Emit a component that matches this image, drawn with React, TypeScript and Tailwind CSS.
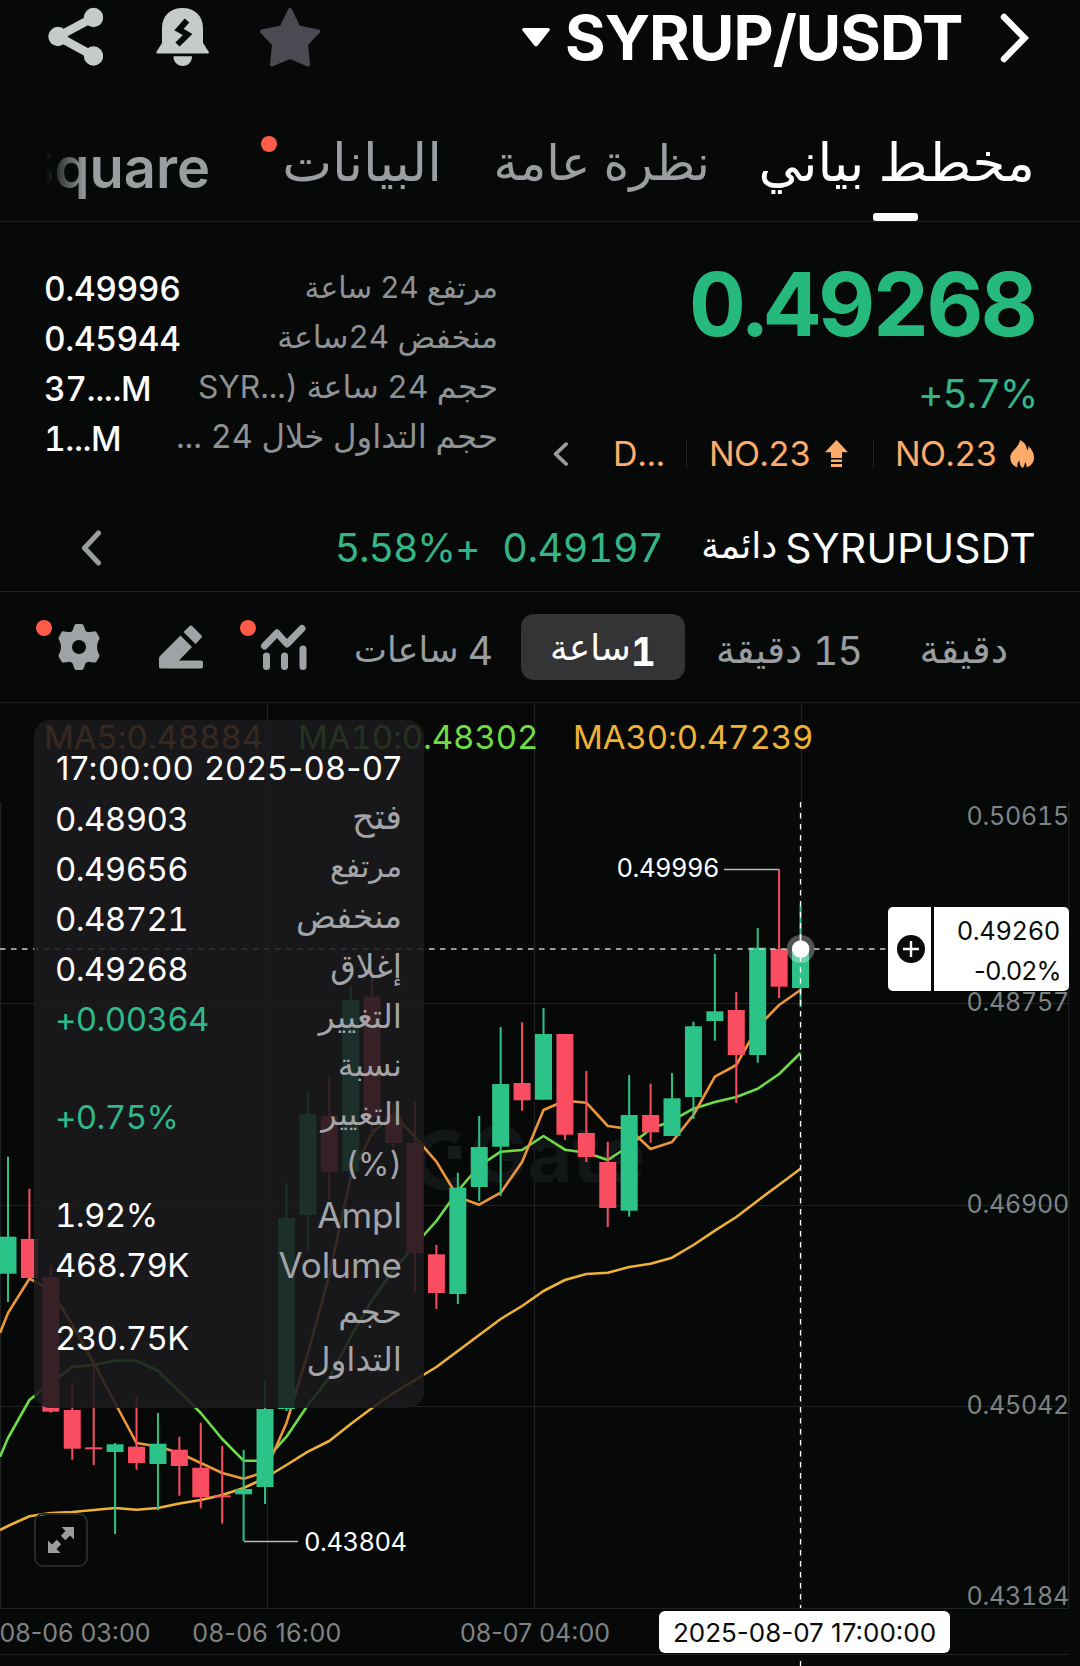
import React from 'react';

type Candle = [top: number, bottom: number, high: number, low: number, up: boolean];

const CANDLE_STEP = 21.42;
const FIRST_X = 8;

const candles: Candle[] = [
    [1236.7, 1273.7, 1156.7, 1302, true],
    [1239, 1278, 1188.7, 1278, false],
    [1277, 1411.7, 1266, 1412.7, false],
    [1410, 1448.7, 1383, 1459.7, false],
    [1447.3, 1449.3, 1366, 1465, false],
    [1444.3, 1452, 1443, 1534, true],
    [1446.7, 1463, 1396, 1469.7, false],
    [1443.7, 1464, 1413, 1510, true],
    [1449.7, 1466, 1436.7, 1495.7, false],
    [1467.7, 1497.3, 1422.7, 1508.3, false],
    [1495.3, 1497.3, 1446, 1523.7, false],
    [1489, 1494.3, 1450, 1541, true],
    [1409, 1487, 1380, 1504, true],
    [1218, 1409, 1183, 1411, true],
    [1114, 1215, 1092, 1250, true],
    [1115.7, 1172, 1076.7, 1200, false],
    [1000, 1171, 986, 1180, true],
    [996.7, 1117, 975, 1136, false],
    [1117, 1143, 1103, 1150, false],
    [1143, 1253, 1102, 1293, false],
    [1254.3, 1293, 1245, 1309, false],
    [1187.7, 1294, 1172.7, 1304, true],
    [1147, 1187, 1116, 1201, true],
    [1084, 1146.7, 1027, 1196, true],
    [1083, 1100.3, 1022.3, 1110.7, false],
    [1034, 1099.7, 1008, 1099.7, true],
    [1034, 1134.7, 1034, 1140, false],
    [1133, 1157, 1071, 1162, false],
    [1162, 1208, 1141.7, 1227, false],
    [1115, 1210.7, 1075, 1216.7, true],
    [1115, 1132.3, 1083.7, 1142.7, false],
    [1098.3, 1136, 1073, 1136, true],
    [1026.3, 1097, 1021.7, 1119, true],
    [1011.3, 1021, 954, 1040.7, true],
    [1010, 1055, 992, 1103, false],
    [947.7, 1055, 928, 1062.7, true],
    [949, 986.7, 869.3, 998, false],
    [948.5, 988, 905.7, 1007, true],
];

const ma5 = [
    1313, 1278.7, 1290, 1325, 1363, 1403, 1443, 1446.5, 1453, 1463, 1473, 1478.7, 1472, 1423, 1353, 1275, 1177, 1133,
    1114, 1137, 1161.7, 1197, 1204.7, 1192.7, 1162, 1110, 1100.7, 1102.7, 1126, 1129, 1149, 1142, 1115, 1076.7, 1065,
    1027, 1005, 990,
];
const ma10 = [
    1438, 1400, 1383, 1367, 1365, 1360.7, 1360.7, 1370.7, 1391.7, 1413, 1439, 1460.7, 1460.7, 1436.7, 1405, 1378, 1337,
    1300, 1270, 1245, 1221, 1191, 1166, 1151.7, 1150, 1136, 1149.7, 1152.7, 1160, 1146, 1129, 1120.7, 1108.7, 1102,
    1097, 1088.7, 1074, 1053,
];
const ma30 = [
    1526, 1516.3, 1513, 1512, 1510, 1508, 1509.7, 1508, 1503.5, 1500, 1495, 1488, 1478, 1465, 1451.7, 1441, 1424, 1408,
    1393, 1380, 1367, 1351, 1335, 1319, 1306, 1291, 1280, 1274, 1272.7, 1267, 1263.7, 1257.7, 1245, 1230.7, 1217,
    1200.7, 1184.7, 1168.7,
];

const toPoints = (edge: number, values: number[]) =>
    [`0,${edge}`, ...values.map((y, i) => `${(FIRST_X + i * CANDLE_STEP).toFixed(1)},${y}`)].join(' ');

const priceLabels = [
    { y: 816, text: '0.50615' },
    { y: 1002, text: '0.48757' },
    { y: 1204, text: '0.46900' },
    { y: 1405, text: '0.45042' },
    { y: 1596, text: '0.43184' },
];

const RedDot: React.FC<{ className: string }> = ({ className }) => (
    <span className={`absolute size-4 rounded-full bg-[#ff5b49] ${className}`} />
);

const ShareIcon = () => (
    <svg width="55" height="60" viewBox="0 0 55 60">
        <path d="M45.500 10.500 10 29.500l35.500 19.500" fill="none" stroke="#c5cacb" strokeWidth="8.500" />
        <g fill="#c5cacb">
            <circle cx="45.500" cy="10.500" r="9.700" />
            <circle cx="10" cy="29.500" r="9.700" />
            <circle cx="45.500" cy="49" r="9.700" />
        </g>
    </svg>
);

const BellIcon = () => (
    <svg width="54" height="60" viewBox="0 0 54 60">
        <path
            d="M6 21C6 8 15 1 26.500 1S47 8 47 21v15l5.700 8.700c.7 1.200 0 1.700-1 1.700H1.500c-1 0-1.500-.7-1-1.700L6 36Z"
            fill="#c5cacb"
        />
        <path d="M17.500 49.200h18.500c0 6-4 9.700-9.200 9.700s-9.300-3.700-9.300-9.700Z" fill="#c5cacb" />
        <path d="M31 13.500 23 22.500l8.500 5-10 10" fill="none" stroke="#060908" strokeWidth="6" />
    </svg>
);

const StarIcon = () => (
    <svg width="62" height="60" viewBox="0 0 62 60">
        <path
            d="m31 3 8.500 17.500L59 24.500 47 37l2 20.500L31 50 13 57.500l2-20.500L3 24.500l19.500-4Z"
            fill="#4a4b52"
            stroke="#4a4b52"
            strokeWidth="4"
            strokeLinejoin="round"
        />
    </svg>
);

const FlameIcon = () => (
    <svg width="24" height="28" viewBox="0 0 24 28" fill="#ffac6a">
        <path d="M10 0c4.500 2.200 7 6 7 10.500 1-.8 1.500-2.500 1.300-4.500C21.800 9 24 13 24 17.500c0 5-3 8.500-7.500 10 .3-2.500-.3-4-1.500-5.500-.2 2.800-.8 4.500-2.500 6-2-1.500-3-3.500-3-7.500C7.500 22.500 7 24.500 7.500 27.300 3 26 .3 22.500.3 17.500.3 10.500 9 8 10 0Z" />
    </svg>
);

const UpIcon = () => (
    <svg width="23" height="28" viewBox="0 0 23 28" fill="#ffac6a">
        <path d="M11.500 0 23 12.300h-6V18H6v-5.700H0Z" />
        <path d="M6 19.600h11v2.400H6zM6 24h11v3H6z" />
    </svg>
);

const GearIcon = () => (
    <svg width="44" height="48" viewBox="0 0 44 48">
        <path
            fillRule="evenodd"
            d="M17 3.500C17.600 1.500 18.500 1 20 1h4c1.500 0 2.400.5 3 2.500l1 3c.6 2 2.500 3 4.500 2.600l4.500-.7c1.300-.2 2 .3 2.700 1.400l2.300 4c.7 1.200.7 2-.2 3.200l-1 2.500c-1 2.200-1 6.800 0 9l1 2.500c.9 1.200.9 2 .2 3.200l-2.300 4c-.7 1.100-1.400 1.600-2.700 1.400l-4.500-.7c-2-.4-3.900.6-4.500 2.600l-1 3C26.400 46.500 25.500 47 24 47h-4c-1.500 0-2.400-.5-3-2.500l-1-3c-.6-2-2.500-3-4.500-2.600l-4.500.7c-1.300.2-2-.3-2.700-1.400l-2.300-4c-.7-1.200-.7-2 .2-3.200l1-2.500c1-2.200 1-6.800 0-9l-1-2.500c-.9-1.200-.9-2-.2-3.200l2.300-4C5 8.700 5.700 8.200 7 8.400l4.500.7C13.500 9.500 15.400 8.500 16 6.500ZM22 17a7 7 0 1 0 0 14 7 7 0 0 0 0-14Z"
            fill="#9fa3a5"
        />
    </svg>
);

const PencilIcon = () => (
    <svg width="44" height="44" viewBox="0 0 44 44" fill="#9fa3a5">
        <path d="M21.500 10.500 33 22 20 35.500h21.500c1.600 0 2.500.8 2.500 2v4c0 1.200-.8 2-2 2H2c-1.200 0-2-.8-2-2V33.500c0-1 .3-1.800 1-2.500Z" />
        <path d="M30.500 1.200c.9-.9 2-.9 2.900 0l8.800 9c.9.9.9 2 0 2.900L36.500 19 24.500 7Z" />
    </svg>
);

const IndicatorIcon = () => (
    <svg width="46" height="46" viewBox="0 0 46 46" fill="none" stroke="#9fa3a5" strokeWidth="7">
        <path d="M3.500 22 16 9l10 11L41 4.500" strokeLinecap="round" strokeLinejoin="round" />
        <path d="M5.500 32v10.500M23.500 32v10.500M42 25v17.500" strokeLinecap="round" />
    </svg>
);

const ChevronLeft: React.FC<{ className: string }> = ({ className }) => (
    <svg className={className} viewBox="0 0 20 36" fill="none" stroke="#9a9da0" strokeWidth="5" preserveAspectRatio="none">
        <path d="M17.500 3 3.500 18l14 15" strokeLinecap="round" strokeLinejoin="round" />
    </svg>
);

const Header = () => (
    <header className="flex h-[104px] items-start justify-between pl-12 pr-[50px] pt-[7px]">
        <div className="flex items-start gap-[53px]">
            <ShareIcon />
            <BellIcon />
            <div className="-ml-1">
                <StarIcon />
            </div>
        </div>
        <div className="flex items-center">
            <svg width="28" height="19" viewBox="0 0 28 19" fill="#fff">
                <path d="M2 0h24c1.700 0 2.400 1.500 1.300 2.800L15.500 17.700c-.8 1-2.200 1-3 0L.7 2.800C-.4 1.500.3 0 2 0Z" />
            </svg>
            <h1 className="ml-[15px] w-[435px] whitespace-nowrap text-[62px] font-bold leading-[61px] tracking-[-0.9px] text-white">
                SYRUP/USDT
            </h1>
            <svg width="30" height="50" viewBox="0 0 30 50" fill="none" stroke="#fff" strokeWidth="6.500">
                <path d="m4 4 20.500 21L4 46" strokeLinecap="round" strokeLinejoin="miter" />
            </svg>
        </div>
    </header>
);

const Tabs = () => (
    <nav dir="rtl" className="flex h-[118px] items-center border-b border-[#1f2122] pb-1 pr-[45px] text-[#9b9ea0]">
        <div className="relative flex h-full w-[275px] items-center whitespace-nowrap pt-1 text-[53px] text-white">
            مخطط بياني
            <span className="absolute -bottom-1 left-[113px] h-2 w-[45px] rounded-[3px] bg-white" />
        </div>
        <div className="mr-[50px] w-[215px] whitespace-nowrap pt-1 text-[49px]">نظرة عامة</div>
        <div className="relative mr-[53px] w-[158px] whitespace-nowrap pt-1 text-[53px]">
            البيانات
            <RedDot className="-left-[23px] top-[17px]" />
        </div>
        <div className="relative mr-[76px] h-full w-[165px]">
            <span dir="ltr" className="absolute -right-0.5 top-[31px] whitespace-nowrap text-[56px] font-semibold leading-[66px]">
                Square
            </span>
            <span className="absolute inset-y-0 -left-12 w-[51px] bg-[#060908]" />
            <span className="absolute inset-y-0 left-[3px] w-10 bg-linear-to-r from-[#060908] to-transparent" />
        </div>
    </nav>
);

const stats = [
    { label: 'مرتفع 24 ساعة', value: '0.49996', size: 'text-[29.700px]' },
    { label: 'منخفض 24ساعة', value: '0.45944', size: 'text-[31.300px]' },
    { label: 'حجم 24 ساعة (...SYR', value: '37....M', size: 'text-[31.700px]' },
    { label: 'حجم التداول خلال 24 ...', value: '1...M', size: 'text-[32.400px]' },
];

const Summary = () => (
    <section className="flex h-[270px] justify-between pl-11 pr-[45px]">
        <div className="mt-[41px] w-[454px]">
            {stats.map((s) => (
                <div key={s.value} className="flex h-[50px] items-center justify-between">
                    <span className="pt-px text-[33.500px] font-medium leading-[48px] tracking-[-0.400px] text-white">{s.value}</span>
                    <span dir="rtl" className={`whitespace-nowrap pb-0.5 leading-[46px] text-[#8f9294] ${s.size}`}>
                        {s.label}
                    </span>
                </div>
            ))}
        </div>
        <div className="flex flex-col items-end">
            <div className="mt-[37px] text-[88px] font-bold leading-[90px] tracking-[-2.700px] text-[#25b97e]">0.49268</div>
            <div className="-mr-0.5 mt-[22px] text-[39px] leading-[46px] tracking-[-1.200px] text-[#35b487]">+5.7%</div>
            <div className="mr-px mt-[23px] flex h-[28px] items-center text-[34px] leading-[28px] text-[#ffac6a]">
                <ChevronLeft className="mr-[45px] h-6 w-[15px]" />
                <span className="w-[73px]">D...</span>
                <span className="h-7 w-px bg-[#242627]" />
                <span className="ml-[22px] w-[116px] tracking-[-0.600px]">NO.23</span>
                <UpIcon />
                <span className="ml-[25px] h-7 w-px bg-[#242627]" />
                <span className="ml-[21px] w-[115px] tracking-[-0.500px]">NO.23</span>
                <FlameIcon />
            </div>
        </div>
    </section>
);

const PerpetualRow = () => (
    <section className="flex h-[100px] items-center justify-between border-b border-[#1f2122] pl-[81px] pr-11 pt-3">
        <ChevronLeft className="h-9 w-5" />
        <div className="flex items-center whitespace-nowrap leading-[48px]">
            <span className="mr-[23px] text-[39.500px] tracking-[-1.200px] text-[#35b487]">5.58%+</span>
            <span className="mr-[38px] text-[39.500px] tracking-[-0.500px] text-[#35b487]">0.49197</span>
            <span className="mr-2 pb-1.5 text-[36px] leading-[42px] text-white">دائمة</span>
            <span className="text-[41px] tracking-[0.200px] text-white">SYRUPUSDT</span>
        </div>
    </section>
);

const Toolbar = () => (
    <section className="flex h-[111px] items-center border-b border-[#1f2122] pb-px text-[#9b9ea0]">
        <div className="relative ml-[57px]">
            <GearIcon />
            <RedDot className="-left-[21px] -top-[3px]" />
        </div>
        <div className="ml-[58px]">
            <PencilIcon />
        </div>
        <div className="relative ml-[58px]">
            <IndicatorIcon />
            <RedDot className="-left-[21px] -top-[4px]" />
        </div>
        <div dir="rtl" className="ml-[47px] flex w-[139px] items-center justify-between whitespace-nowrap pt-2">
            <span className="text-[39px] leading-[50px]">4</span>
            <span className="pb-1 text-[35px] leading-[50px]">ساعات</span>
        </div>
        <div dir="rtl" className="ml-[28px] flex h-[66px] w-[164px] items-center justify-center rounded-[13px] bg-[#343437] pt-1.5 text-white">
            <span className="pt-1 text-[39px] font-bold leading-[46px]">1</span>
            <span className="pb-1 text-[35.500px] leading-[46px]">ساعة</span>
        </div>
        <div dir="rtl" className="ml-[31px] flex w-[146px] items-center justify-between whitespace-nowrap pt-2">
            <span className="text-[39px] leading-[50px] tracking-[-0.800px]">15</span>
            <span className="pb-1 text-[38px] leading-[46px]">دقيقة</span>
        </div>
        <div dir="rtl" className="ml-[59px] w-[87px] whitespace-nowrap pt-1 text-[39px] leading-[46px]">
            دقيقة
        </div>
    </section>
);

const tooltipRows = [
    { labels: ['فتح'], value: '0.48903', color: 'text-white', size: 'text-[35px]' },
    { labels: ['مرتفع'], value: '0.49656', color: 'text-white', size: 'text-[30px]' },
    { labels: ['منخفض'], value: '0.48721', color: 'text-white', size: 'text-[33px]' },
    { labels: ['إغلاق'], value: '0.49268', color: 'text-white', size: 'text-[33px]' },
    { labels: ['التغيير'], value: '+0.00364', color: 'text-[#2fb98a]', size: 'text-[33px]' },
    { labels: ['نسبة', 'التغيير', '(%)'], value: '+0.75%', color: 'text-[#2fb98a]', size: 'text-[32px]' },
    { labels: ['Ampl'], value: '1.92%', color: 'text-white', size: 'text-[35px]' },
    { labels: ['Volume'], value: '468.79K', color: 'text-white', size: 'text-[35px]' },
    { labels: ['حجم', 'التداول'], value: '230.75K', color: 'text-white', size: 'text-[33px]' },
];

const isLatin = (label: string) => /[A-Za-z%]/.test(label);

const CandleTooltip = () => (
    <div className="absolute left-[34px] top-[17px] h-[688px] w-[390px] rounded-2xl bg-[#1b1a1e]/88 pl-[21px] pr-[22px] pt-6 text-[33px] text-white">
        <div className="flex h-[50px] items-center justify-between whitespace-nowrap pl-px proportional-nums tracking-[0.600px]">
            <span>17:00:00</span>
            <span>2025-08-07</span>
        </div>
        {tooltipRows.map((row) => (
            <div key={row.value} className="flex items-center justify-between">
                <span className={`leading-10 tracking-[-0.600px] ${row.color}`}>{row.value}</span>
                <span className={`flex flex-col items-end text-[#a3a4a7] ${row.size}`}>
                    {row.labels.map((label) => (
                        <span
                            key={label}
                            dir="auto"
                            className={`flex items-center leading-[42px] ${row.labels.length > 1 ? 'h-[48.500px]' : 'h-[50px]'} ${
                                isLatin(label) ? '' : 'pb-1.5'
                            }`}
                        >
                            {label}
                        </span>
                    ))}
                </span>
            </div>
        ))}
    </div>
);

const Chart = () => (
    <svg width="1080" height="963" viewBox="0 703 1080 963" className="block">
        {/* grid */}
        <g stroke="#1f2223" strokeWidth="1.200">
            <path d="M.6 802V1608M267.500 703V1608M534.500 703V1608M801.500 703V1608M1068.700 802V1608" />
            <path d="M0 1003.500H1069M0 1205.500H1069M0 1406.500H1069M0 1608.500H1069M0 1654.500H1069" />
        </g>

        {/* watermark */}
        <path d="M459 1139a25 25 0 1 0 0 42" fill="none" stroke="#121616" strokeWidth="11" />
        <path d="M448 1146h13v13h-13z" fill="#161a1a" />
        <text x="470" y="1182" fontSize="77" fontWeight="700" fill="#121616">
            Gate
        </text>

        <g fontSize="33" letterSpacing="-.1">
            <text x="44" y="749" fill="#f0943a">
                MA5:0.48884
            </text>
            <text x="298" y="749" fill="#6fdc46">
                MA10:0.48302
            </text>
            <text x="573" y="749" fill="#efb236">
                MA30:0.47239
            </text>
        </g>

        <g fill="none" strokeWidth="2.600" strokeLinejoin="round">
            <polyline points={toPoints(1530, ma30)} stroke="#efb236" />
            <polyline points={toPoints(1456.7, ma10)} stroke="#6fdc46" />
            <polyline points={toPoints(1333, ma5)} stroke="#ec9539" />
        </g>

        {candles.map(([top, bottom, high, low, up], i) => {
            const x = FIRST_X + i * CANDLE_STEP;
            const color = up ? '#2cc388' : '#fa4d62';
            return (
                <g key={i} fill={color}>
                    <rect x={x - 1} y={high} width="2" height={low - high} />
                    <rect x={x - 8.5} y={top} width="17" height={bottom - top} />
                </g>
            );
        })}

        {/* high / low markers */}
        <path d="M724 869.500h55M244 1541.500h54" stroke="#b9bcbd" strokeWidth="1.500" />
        <g fontSize="25.500" fill="#fff" letterSpacing="-.5">
            <text x="616.500" y="877">
                0.49996
            </text>
            <text x="304" y="1551">
                0.43804
            </text>
        </g>

        <g fontSize="25" fill="#808384">
            <g letterSpacing="-.2">
                {priceLabels.map((p) => (
                    <text key={p.text} x="1069" y={p.y + 9} textAnchor="end">
                        {p.text}
                    </text>
                ))}
            </g>
            <g className="proportional-nums">
                <text x="-.5" y="1642">
                    08-06 03:00
                </text>
                <text x="267" y="1642" textAnchor="middle" letterSpacing=".35">
                    08-06 16:00
                </text>
                <text x="535" y="1642" textAnchor="middle">
                    08-07 04:00
                </text>
            </g>
        </g>

        {/* crosshair */}
        <path d="M0 949H888" stroke="#c9cccc" strokeWidth="1.500" strokeDasharray="5.500 5.500" />
        <path d="M800.500 802V1608M800.500 1661v5" stroke="#fff" strokeWidth="1.300" strokeDasharray="5.500 5.500" />
        <circle cx="800.700" cy="949" r="14" fill="#fff" fillOpacity="0.300" />
        <circle cx="800.700" cy="949" r="8.700" fill="#fff" />
    </svg>
);

const ChartArea = () => (
    <section className="relative">
        <Chart />
        <CandleTooltip />

        <div className="absolute left-[888px] top-[204px] flex h-[84px] w-[181px] gap-[3px] text-[25.500px] tracking-[-0.400px] text-[#0a0c0c]">
            <div className="flex w-[43px] items-center justify-center rounded-l-[5px] bg-white pl-0.5">
                <svg width="28" height="28" viewBox="0 0 28 28">
                    <circle cx="14" cy="14" r="14" fill="#0a0c0c" />
                    <path d="M14 6v16M6 14h16" stroke="#fff" strokeWidth="2.400" />
                </svg>
            </div>
            <div className="flex flex-1 flex-col items-end rounded-r-[5px] bg-white pr-[9px] pt-1 leading-10">
                <span>0.49260</span>
                <span className="-mr-px proportional-nums tracking-[-0.600px]">-0.02%</span>
            </div>
        </div>

        <div className="absolute left-[659px] top-[908px] flex h-[42px] w-[291px] items-center justify-center whitespace-nowrap rounded-[6px] bg-white text-[26px] text-[#0a0c0c] proportional-nums">
            2025-08-07 17:00:00
        </div>

        <div className="absolute left-[34px] top-[810px] flex size-[54px] items-center justify-center rounded-[9px] border-2 border-[#262929]">
            <svg width="26" height="26" viewBox="0 0 26 26" fill="#9a9c9d">
                <path d="M13.500 0H26v12.500l-4-4-4.700 4.700-4.500-4.500L17.500 4ZM0 13.500l4 4 4.700-4.700 4.500 4.500L8.500 22l4 4H0Z" />
            </svg>
        </div>
    </section>
);

const App: React.FC = () => {
    return (
        <div className="h-[1666px] w-[1080px] overflow-hidden bg-[#060908] font-['Inter','DejaVu_Sans',sans-serif] tabular-nums">
            <Header />
            <Tabs />
            <Summary />
            <PerpetualRow />
            <Toolbar />
            <ChartArea />
        </div>
    );
};

export default App;
